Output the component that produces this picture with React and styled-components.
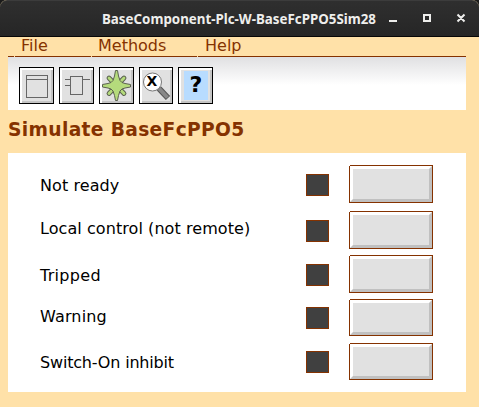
import React from "react";
import styled, { createGlobalStyle } from "styled-components";

const GlobalStyle = createGlobalStyle`
  *, *::before { box-sizing: border-box; }
  body { margin: 0; background: #ffe1a8; }
`;

const Window = styled.div`
  width: 479px;
  height: 407px;
  overflow: hidden;
  background: #ffe1a8;
  font-family: "DejaVu Sans", sans-serif;
  font-size: 16px;
  color: #000;
`;

const TitleBar = styled.header`
  display: flex;
  align-items: center;
  height: 37px;
  padding-left: 102px;
  border-top: 1px solid #3c3c3c;
  border-bottom: 1px solid #070707;
  border-radius: 7px 7px 0 0;
  background: linear-gradient(#2f2f2f, #262626);
  box-shadow: 0 -8px 0 8px #1b1b1b;
`;

const WindowTitle = styled.h1`
  flex: none;
  width: 286px;
  margin: 0;
  font: bold 13.33px/20px "Noto Sans", sans-serif;
  color: #eeeeec;
  white-space: nowrap;
`;

const WindowControls = styled.svg`
  flex: none;
  display: block;
`;

const MenuBar = styled.nav`
  display: flex;
  gap: 1px;
  height: 20px;
  margin: 0 13px 0 8px;
`;

const MenuItem = styled.div`
  flex: ${(p) => (p.$width ? `0 0 ${p.$width}px` : "1")};
  padding-left: ${(p) => p.$indent ?? 6}px;
  border-bottom: 1px solid #853200;
  line-height: 17px;
  color: #853200;
  white-space: nowrap;
`;

const ToolBar = styled.div`
  display: flex;
  gap: 5px;
  height: 53px;
  margin: 0 13px 0 8px;
  padding: 10px 11px 0;
  background: linear-gradient(#e0e0e2, #fff 28px);
`;

const ToolButton = styled.button`
  flex: none;
  display: block;
  width: ${(p) => p.$width}px;
  height: 37px;
  padding: 0;
  border: 1px solid #000;
  background: #e1e1e1;
  box-shadow: inset 2px 2px 0 #fff, inset -2px -2px 0 #c4c4c4;

  svg { display: block; margin: -1px; }
`;

const Heading = styled.h2`
  height: 43px;
  margin: 0 8px;
  font-size: 18.67px;
  line-height: 39px;
  letter-spacing: 0.34px;
  color: #853200;
`;

const Panel = styled.main`
  display: flex;
  flex-direction: column;
  height: 239px;
  margin: 0 13px 0 8px;
  padding: 12px 33px 0 32px;
  background: #fff;
`;

const SignalRow = styled.div`
  display: grid;
  grid-template-columns: 266px 43px 84px;
  align-items: start;
  height: ${(p) => p.$height}px;
`;

const Label = styled.span`
  padding-top: ${(p) => p.$top}px;
  line-height: 20px;
  letter-spacing: ${(p) => p.$spacing}px;
  white-space: nowrap;
`;

const Lamp = styled.span`
  width: 23px;
  height: 22px;
  margin-top: ${(p) => p.$top}px;
  border: 1px solid #853200;
  background: #404040;
`;

const PushButton = styled.button`
  display: flex;
  width: 84px;
  height: ${(p) => p.$height}px;
  padding: 0;
  border: 1px solid #853200;
  background: #e1e1e1;
  clip-path: polygon(1px 0, 100% 0, 100% 100%, 0 100%, 0 1px, 1px 1px);

  &::before {
    content: "";
    flex: 1;
    align-self: stretch;
    border: 3px solid;
    border-color: #fff #c0c0c0 #c0c0c0 #fff;
  }
`;

const signals = [
  { label: "Not ready", row: 46, top: 11, lamp: 9, button: 38, spacing: 0.08 },
  { label: "Local control (not remote)", row: 44, top: 8, lamp: 9, button: 38, spacing: 0.07 },
  { label: "Tripped", row: 44, top: 11, lamp: 9, button: 38, spacing: 0.3 },
  { label: "Warning", row: 44, top: 8, lamp: 8, button: 37, spacing: 0.15 },
  { label: "Switch-On inhibit", row: 44, top: 10, lamp: 8, button: 37, spacing: -0.18 },
];

const FormIcon = () => (
  <svg width="35" height="37" fill="none" stroke="#666" shapeRendering="crispEdges">
    <path d="M7.5 8.5h21v22h-21zM7.5 12.5h21" />
  </svg>
);

const BlockIcon = () => (
  <svg width="35" height="37" fill="none" stroke="#666" shapeRendering="crispEdges">
    <path d="M11.5 9.5h12v18h-12zM6 12.5h5M6 18.5h5M24 12.5h7" />
  </svg>
);

const StarIcon = () => (
  <svg width="35" height="37">
    <g fill="none" strokeLinecap="round">
      <path d="M10 11L25 26.500M25 11L10 26.500" stroke="#5a6150" strokeWidth="4.800" />
      <path d="M10 11L25 26.500M25 11L10 26.500" stroke="#b5db7c" strokeWidth="2.800" />
    </g>
    <path
      fill="#b5db7c"
      stroke="#5a6150"
      d="M16.500 3.500h2l1 5.500 1.500 4.500 2 2 3 1 5.500 1v2.500l-5.500 1-3 1-2 2-1.500 4.500-1 5h-2l-1-5-1.500-4.500-2-2-3-1-5.500-1v-2.500l5.500-1 3-1 2-2 1.500-4.500z"
    />
  </svg>
);

const SearchIcon = () => (
  <svg width="34" height="37">
    <path d="M20 21.500L29 31" stroke="#555" strokeWidth="6" />
    <path d="M20 21.500L28.500 30.500" stroke="#888" strokeWidth="4" />
    <circle cx="13.500" cy="15" r="9" fill="#fff" stroke="#777" />
    <text x="13" y="19" textAnchor="middle" fontFamily="DejaVu Sans, sans-serif" fontSize="14" fontWeight="bold">X</text>
  </svg>
);

const HelpIcon = () => (
  <svg width="35" height="37">
    <path fill="#b8dcff" d="M6 4h24v29H6z" />
    <text x="18" y="25" textAnchor="middle" fontFamily="DejaVu Sans, sans-serif" fontSize="22" fontWeight="bold">?</text>
  </svg>
);

export default function App() {
  return (
    <>
      <GlobalStyle />
      <Window>
        <TitleBar>
          <WindowTitle>BaseComponent-Plc-W-BaseFcPPO5Sim28</WindowTitle>
          <WindowControls width="84" height="35" fill="none" stroke="#eeeeec" strokeWidth="2">
            <path d="M1 20h8M36 14h6v6h-6zM69.500 13.500l7 7m0-7l-7 7" />
          </WindowControls>
        </TitleBar>
        <MenuBar>
          <MenuItem $width={6} />
          <MenuItem $width={76}>File</MenuItem>
          <MenuItem $width={105}>Methods</MenuItem>
          <MenuItem $indent={7}>Help</MenuItem>
        </MenuBar>
        <ToolBar>
          <ToolButton $width={35} aria-label="Open object"><FormIcon /></ToolButton>
          <ToolButton $width={35} aria-label="Open block"><BlockIcon /></ToolButton>
          <ToolButton $width={35} aria-label="Simulate"><StarIcon /></ToolButton>
          <ToolButton $width={34} aria-label="Search"><SearchIcon /></ToolButton>
          <ToolButton $width={35} aria-label="Help"><HelpIcon /></ToolButton>
        </ToolBar>
        <Heading>Simulate BaseFcPPO5</Heading>
        <Panel>
          {signals.map((s) => (
            <SignalRow key={s.label} $height={s.row}>
              <Label $top={s.top} $spacing={s.spacing}>{s.label}</Label>
              <Lamp $top={s.lamp} />
              <PushButton $height={s.button} aria-label={s.label} />
            </SignalRow>
          ))}
        </Panel>
      </Window>
    </>
  );
}
